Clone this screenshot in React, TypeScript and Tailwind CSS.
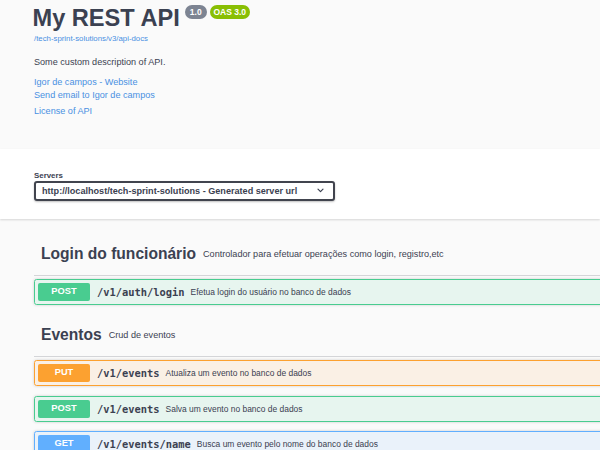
import React from "react";

type Op = {
  method: "POST" | "PUT" | "GET";
  path: string;
  summary: string;
};

const styles = {
  POST: { block: "border-[#49cc90] bg-[rgba(73,204,144,0.1)]", badge: "bg-[#49cc90]" },
  PUT: { block: "border-[#fca130] bg-[rgba(252,161,48,0.1)]", badge: "bg-[#fca130]" },
  GET: { block: "border-[#61affe] bg-[rgba(97,175,254,0.1)]", badge: "bg-[#61affe]" },
};

function OpBlock({ op }: { op: Op }) {
  const s = styles[op.method];
  return (
    <div
      className={`mb-[9.75px] flex h-[26px] items-center rounded-[2.6px] border pl-[3px] shadow-[0_0_3px_rgba(0,0,0,0.19)] ${s.block}`}
    >
      <div
        className={`flex h-[18px] w-[52px] shrink-0 items-center justify-center rounded-[2px] text-[9.3px] font-bold text-white ${s.badge}`}
      >
        {op.method}
      </div>
      <span className="ml-[7px] font-['DejaVu_Sans_Mono',monospace] text-[10.4px] font-bold leading-[14px] text-[#3b4151]">
        {op.path}
      </span>
      <span className="ml-[6px] text-[8.45px] leading-[12px] text-[#3b4151]">{op.summary}</span>
    </div>
  );
}

function Tag({ name, desc, ops }: { name: string; desc: string; ops: Op[] }) {
  return (
    <div>
      <div className="flex items-center border-b border-[rgba(59,65,81,0.2)] pb-[11px] pl-[7px] pt-[10px]">
        <span className="text-[15.6px] font-bold leading-[20px]">{name}</span>
        <span className="ml-[7px] text-[9.1px] leading-[12px]">{desc}</span>
      </div>
      <div className="mt-[3px]">
        {ops.map((op, i) => (
          <OpBlock key={i} op={op} />
        ))}
      </div>
    </div>
  );
}

export default function App() {
  return (
    <div className="h-[450px] w-[600px] overflow-hidden bg-[#fafafa] font-['Liberation_Sans',Arial,sans-serif] text-[#3b4151]">
      {/* Info */}
      <div className="h-[149px] pl-[34px]">
        <div className="flex items-start pt-[7px]">
          <h1 className="ml-[-1.5px] text-[23.6px] font-bold leading-[23px]">My REST API</h1>
          <div className="ml-[5px] mt-[-2px] flex gap-[3px]">
            <span className="flex h-[14px] w-[22px] items-center justify-center rounded-full bg-[#7d8492] text-[8.5px] font-bold text-white">
              1.0
            </span>
            <span className="flex h-[14px] w-[40px] items-center justify-center rounded-full bg-[#89bf04] text-[8.5px] font-bold text-white">
              OAS 3.0
            </span>
          </div>
        </div>
        <div className="mt-[4px] text-[7.8px] leading-[10px] text-[#4990e2]">/tech-sprint-solutions/v3/api-docs</div>
        <div className="mt-[12px] text-[9.1px] leading-[12px]">Some custom description of API.</div>
        <div className="mt-[8px] text-[9.1px] leading-[13px] text-[#4990e2]">
          <div>Igor de campos - Website</div>
          <div>Send email to Igor de campos</div>
        </div>
        <div className="mt-[2.5px] text-[9.1px] leading-[13px] text-[#4990e2]">License of API</div>
      </div>

      {/* Servers */}
      <div className="h-[70px] bg-white pl-[34px] pt-[21.5px] shadow-[0_1px_2px_0_rgba(0,0,0,0.15)]">
        <div className="text-[7.9px] font-bold leading-[10px]">Servers</div>
        <div className="flex h-[20px] w-[301px] items-center justify-between rounded-[3px] border-2 border-[#41444e] bg-white pl-[6px] pr-[9px] shadow-[0_1px_2px_0_rgba(0,0,0,0.25)]">
          <span className="text-[9.1px] font-bold leading-[12px]">
            http://localhost/tech-sprint-solutions - Generated server url
          </span>
          <svg width="7" height="5" viewBox="0 0 7 5" fill="none">
            <path d="M1 1.2l2.5 2.5 2.5-2.5" stroke="#3b4151" strokeWidth="1.2" strokeLinecap="round" strokeLinejoin="round" />
          </svg>
        </div>
      </div>

      {/* Tags */}
      <div className="mt-[15px] w-[620px] pl-[34px]">
        <Tag
          name="Login do funcionário"
          desc="Controlador para efetuar operações como login, registro,etc"
          ops={[{ method: "POST", path: "/v1/auth/login", summary: "Efetua login do usuário no banco de dados" }]}
        />
        <Tag
          name="Eventos"
          desc="Crud de eventos"
          ops={[
            { method: "PUT", path: "/v1/events", summary: "Atualiza um evento no banco de dados" },
            { method: "POST", path: "/v1/events", summary: "Salva um evento no banco de dados" },
            { method: "GET", path: "/v1/events/name", summary: "Busca um evento pelo nome do banco de dados" },
          ]}
        />
      </div>
    </div>
  );
}
